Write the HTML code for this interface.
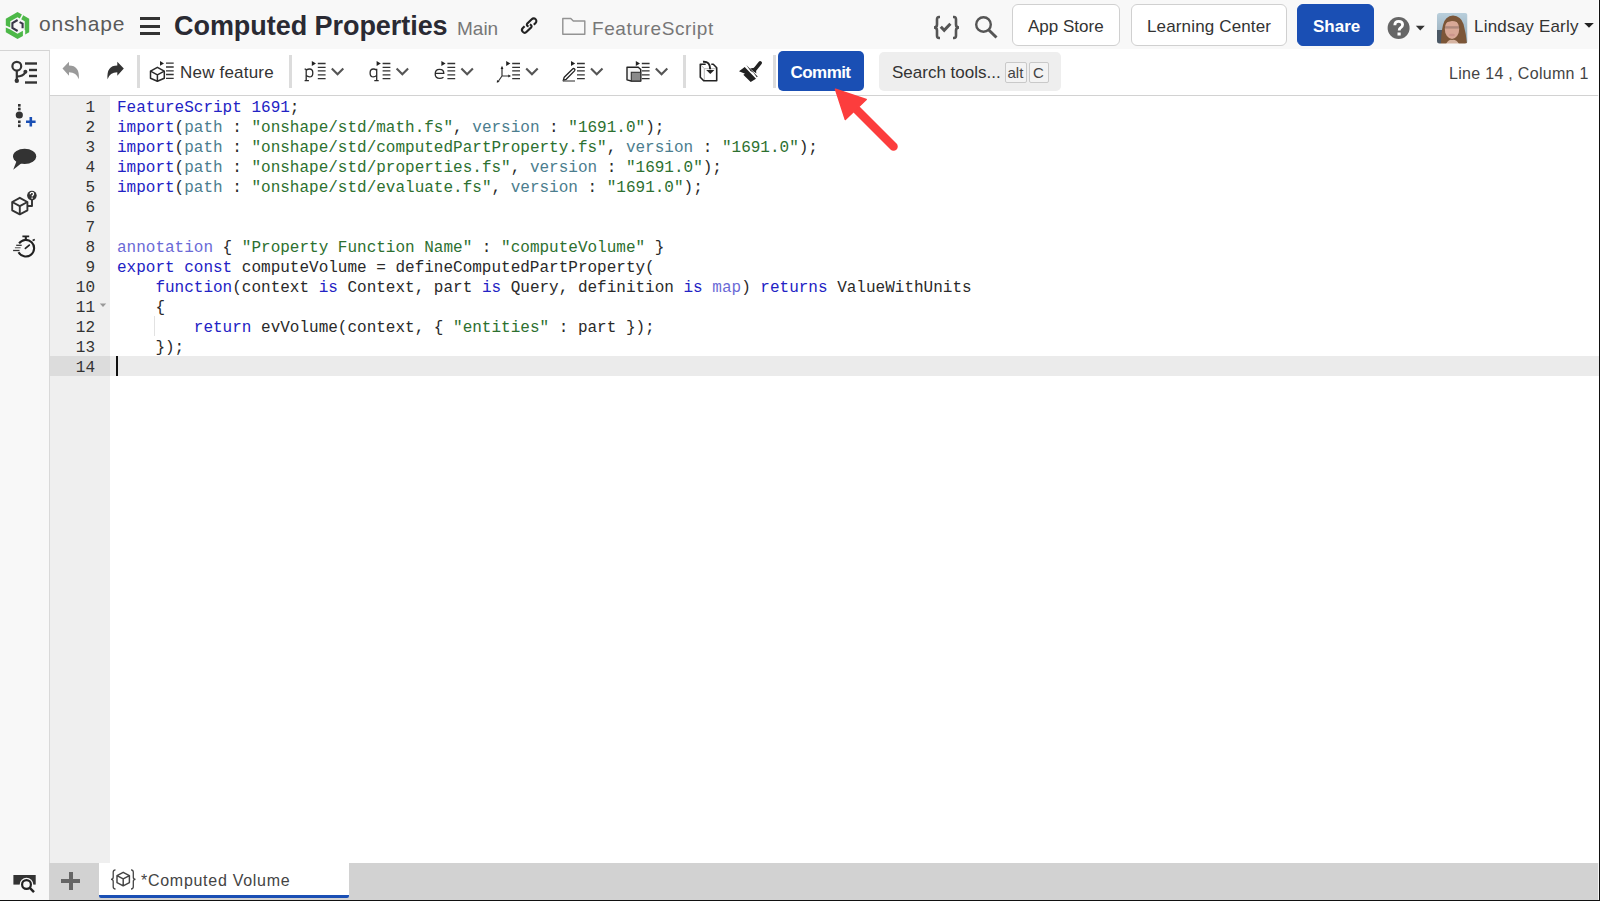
<!DOCTYPE html>
<html><head><meta charset="utf-8">
<style>
*{box-sizing:border-box;margin:0;padding:0}
html,body{width:1600px;height:901px;overflow:hidden;background:#f8f8f8;font-family:"Liberation Sans",sans-serif;position:relative}
.abs{position:absolute}
svg{position:absolute;overflow:visible}
#hdr{left:0;top:0;width:1600px;height:50px;background:#f8f8f8}
#side{left:0;top:50px;width:50px;height:851px;background:#f8f8f8;border-right:1px solid #d9d9d9;border-top:1px solid #d4d4d4}
#tb{left:50px;top:49px;width:1550px;height:47px;background:#fff;border-bottom:1px solid #d2d2d2}
#gut{left:50px;top:96px;width:60px;height:767px;background:#efefef}
#code{left:110px;top:96px;width:1490px;height:767px;background:#fff}
#tabs{left:49px;top:863px;width:1551px;height:38px;background:#d2d2d2}
.t{position:absolute;white-space:nowrap;line-height:1}
.ln{position:absolute;left:50px;width:45px;text-align:right;font-family:"Liberation Mono",monospace;font-size:16px;color:#333;line-height:25px;height:20px}
.cl{position:absolute;left:117px;font-family:"Liberation Mono",monospace;font-size:16px;color:#2a2a2a;line-height:25px;height:20px;white-space:pre}
.k{color:#2222c4}
.v{color:#4b7d8e}
.s{color:#2d7030}
.a{color:#6a6ad6}
.btn{position:absolute;top:4px;height:42px;background:#fff;border:1px solid #d0d0d0;border-radius:6px}
.sep{position:absolute;top:55px;width:3px;height:33px;background:#dcdcdc}
.kbd{position:absolute;top:62px;height:21px;border:1px solid #c9c9c9;border-radius:2px;background:#f3f3f3}
</style></head><body>
<div id="hdr" class="abs"></div>
<div id="side" class="abs"></div>
<div id="tb" class="abs"></div>
<div id="gut" class="abs"></div>
<div id="code" class="abs"></div>
<div id="tabs" class="abs"></div>
<div class="abs" style="left:1598px;top:0;width:1px;height:901px;background:rgba(255,255,255,0.8)"></div>
<div class="abs" style="left:1599px;top:0;width:1px;height:901px;background:#111"></div>
<div class="abs" style="left:0;top:900px;width:1600px;height:1px;background:#111"></div>

<!-- HEADER -->
<!-- logo -->
<svg style="left:0;top:0" width="40" height="48" viewBox="0 0 40 48">
  <g fill="#4db848">
    <path d="M5.8 25.6 V18.75 L17.5 12 L21.9 14.5 L19.8 18.4 L17.5 17.2 L10.3 21.35 V27.4 Z"/>
    <path d="M5.8 27.6 L10.3 29.4 L17.5 33.8 L22.9 30.7 V36.1 L17.5 39 L5.8 32.25 Z"/>
    <path d="M23.2 15.2 L29.2 18.75 V32.25 L25.2 34.5 V30.2 L24.7 29.9 V21.35 L21.2 19.3 Z"/>
  </g>
  <g fill="none" stroke="#393848" stroke-width="2.1">
    <path d="M17.6 20 L12.4 23 V28 L17.6 31"/>
    <path d="M19.6 22.1 L22.6 23.6 V28.2"/>
  </g>
</svg>
<div class="t" style="left:39px;top:13px;font-size:21px;color:#5a5a5a;letter-spacing:0.8px">onshape</div>
<!-- hamburger -->
<div class="abs" style="left:140px;top:17px;width:20px;height:3px;background:#333"></div>
<div class="abs" style="left:140px;top:24.5px;width:20px;height:3px;background:#333"></div>
<div class="abs" style="left:140px;top:32px;width:20px;height:3px;background:#333"></div>
<div class="t" style="left:174px;top:12.5px;font-size:27px;font-weight:bold;color:#2a2a33;letter-spacing:-0.05px">Computed Properties</div>
<div class="t" style="left:457px;top:18.5px;font-size:19px;color:#777">Main</div>
<!-- link icon -->
<svg style="left:516px;top:12px" width="28" height="28" viewBox="0 0 28 28">
  <g fill="none" stroke="#222" stroke-width="2.1" stroke-linecap="butt">
    <path d="M12.6 14.6 Q10 13.6 11.1 11.7 L15.75 7.13 A2.7 2.7 0 0 1 19.57 10.95 L17.8 12.7"/>
    <path d="M13.8 12.4 Q16.4 13.4 15.3 15.3 L10.65 19.87 A2.7 2.7 0 0 1 6.83 16.05 L8.6 14.3"/>
  </g>
</svg>
<!-- folder -->
<svg style="left:560px;top:15px" width="28" height="22" viewBox="0 0 28 22">
  <path d="M2.8 3.5 H10.8 L13.3 6 H24.8 V19.3 H2.8 Z" fill="none" stroke="#939393" stroke-width="1.45" stroke-linejoin="round"/>
</svg>
<div class="t" style="left:592px;top:18.5px;font-size:19px;color:#777;letter-spacing:0.6px">FeatureScript</div>

<!-- braces check -->
<svg style="left:929px;top:12px" width="34" height="30" viewBox="0 0 34 30">
  <g fill="none" stroke="#555" stroke-width="2.6" stroke-linecap="butt">
    <path d="M11 5 H10 Q8 5 8 7.5 V12.5 Q8 15.5 5 15.5 Q8 15.5 8 18.5 V23.5 Q8 26 10 26 H11"/>
    <path d="M24 5 H25 Q27 5 27 7.5 V12.5 Q27 15.5 30 15.5 Q27 15.5 27 18.5 V23.5 Q27 26 25 26 H24"/>
    <path d="M11.8 14.8 L15.2 18.4 L21.4 11.8" stroke-width="3"/>
  </g>
</svg>
<!-- search -->
<svg style="left:970px;top:12px" width="32" height="30" viewBox="0 0 32 30">
  <circle cx="13.5" cy="12.5" r="7.3" fill="none" stroke="#555" stroke-width="2.4"/>
  <path d="M18.8 18 L26.5 25.5" stroke="#555" stroke-width="3"/>
</svg>

<div class="btn" style="left:1012px;width:108px"></div>
<div class="t" style="left:1028px;top:18px;font-size:17px;color:#333">App Store</div>
<div class="btn" style="left:1131px;width:156px"></div>
<div class="t" style="left:1147px;top:18px;font-size:17px;color:#333;letter-spacing:0.15px">Learning Center</div>
<div class="btn" style="left:1297px;width:77px;background:#1a4fb4;border-color:#1a4fb4"></div>
<div class="t" style="left:1313px;top:18px;font-size:17px;color:#fff;font-weight:bold">Share</div>
<!-- help -->
<svg style="left:1386px;top:15.5px" width="44" height="26" viewBox="0 0 44 26">
  <circle cx="12.6" cy="12" r="11" fill="#666"/>
  <path d="M8.8 9.2 Q8.8 5.4 12.7 5.4 Q16.6 5.4 16.6 8.8 Q16.6 10.8 14.4 12 Q13.2 12.7 13.2 14.4" fill="none" stroke="#fff" stroke-width="2.8"/>
  <rect x="11.5" y="16.5" width="3.2" height="3" fill="#fff"/>
  <path d="M29.8 9.8 H38.8 L34.3 14.5 Z" fill="#333"/>
</svg>
<!-- avatar -->
<svg style="left:1437px;top:13px" width="30.5" height="30.5" viewBox="0 0 30.5 30.5">
  <defs>
    <clipPath id="av"><rect x="0" y="0" width="30.5" height="30.5" rx="2.5"/></clipPath>
    <linearGradient id="avbg" x1="0" y1="0" x2="0" y2="1"><stop offset="0" stop-color="#b9cfdc"/><stop offset="1" stop-color="#8ea3b2"/></linearGradient>
  </defs>
  <filter id="avb" x="-10%" y="-10%" width="120%" height="120%"><feGaussianBlur stdDeviation="0.7"/></filter>
  <g clip-path="url(#av)"><g filter="url(#avb)">
    <rect width="30.5" height="30.5" fill="url(#avbg)"/>
    <rect x="0" y="17" width="5" height="14" fill="#4b5965"/>
    <path d="M4 31 Q4 20 6 12 Q8 3 16 2.5 Q24 3 26.5 11 Q29 20 30 31 Z" fill="#7b5738"/>
    <ellipse cx="15" cy="16" rx="7.2" ry="10" fill="#d8a896"/>
    <path d="M7.5 11 Q10 4 16 4 Q22 4.5 23.5 12 Q20 8 15 8 Q10 8.5 7.5 11Z" fill="#7b5738"/>
    <rect x="8" y="13.2" width="14" height="2.4" fill="#9c7a70" opacity="0.7"/>
    <ellipse cx="15" cy="22" rx="3" ry="1.2" fill="#c88e88" opacity="0.7"/>
    <path d="M9 31 Q12 26 15 27 Q19 26 22 31 Z" fill="#d6b4a2"/>
  </g></g>
</svg>
<div class="t" style="left:1474px;top:18px;font-size:17px;color:#333;letter-spacing:0.2px">Lindsay Early</div>
<svg style="left:1580px;top:18px" width="18" height="14" viewBox="0 0 18 14">
  <path d="M4.2 5 H13.8 L9 9.8 Z" fill="#222"/>
</svg>

<!-- LEFT SIDEBAR -->
<svg style="left:0;top:50px" width="50" height="220" viewBox="0 0 50 220">
  <!-- feature list -->
  <g fill="none" stroke="#333" stroke-width="2.2">
    <circle cx="16.8" cy="16.2" r="4.4"/>
    <path d="M16.8 20.6 V30.5"/>
    <path d="M16.8 26.5 Q23 26.5 25.2 22.5"/>
  </g>
  <circle cx="16.8" cy="30.8" r="2.2" fill="#333"/>
  <circle cx="25.4" cy="21.8" r="2" fill="#333"/>
  <g stroke="#333" stroke-width="2.4">
    <path d="M25 13.5 H37"/>
    <path d="M29 20 H37"/>
    <path d="M29 26 H37"/>
    <path d="M25 32.5 H37"/>
  </g>
  <!-- insert -->
  <g fill="#333">
    <rect x="18" y="54" width="2.6" height="2.6"/>
    <rect x="18" y="57.7" width="2.6" height="2.6"/>
    <circle cx="19.3" cy="65" r="3.6"/>
    <rect x="18" y="70.5" width="2.6" height="2.6"/>
    <rect x="18" y="74.5" width="2.6" height="2.6"/>
  </g>
  <path d="M26 71.7 H35.6 M30.8 67 V76.5" stroke="#1a4fb4" stroke-width="2.6"/>
  <!-- comment -->
  <ellipse cx="24.6" cy="106.3" rx="11.6" ry="7.6" fill="#333"/>
  <path d="M17 110 L13.2 119.8 L23 112 Z" fill="#333"/>
  <!-- cube ? -->
  <g fill="none" stroke="#333" stroke-width="1.9" stroke-linejoin="round">
    <path d="M12.2 152 L19.8 147.8 L27.4 152 V160.3 L19.8 164.4 L12.2 160.3 Z"/>
    <path d="M12.2 152 L19.8 156.2 L27.4 152 M19.8 156.2 V164.4"/>
    <path d="M27.4 156 H32 V150"/>
  </g>
  <circle cx="31.9" cy="145.6" r="4.8" fill="#333"/>
  <path d="M30.2 144.3 Q30.2 142.4 31.9 142.4 Q33.6 142.4 33.6 144 Q33.6 145 32.3 145.7 V146.6" fill="none" stroke="#fff" stroke-width="1.3"/>
  <rect x="31.4" y="147.5" width="1.4" height="1.3" fill="#fff"/>
  <!-- stopwatch -->
  <g fill="none" stroke="#222" stroke-width="2.1">
    <path d="M19.09 193.32 A8.3 8.3 0 1 1 18.54 202.22"/>
    <path d="M25.8 186.5 V189.8"/>
  </g>
  <path d="M22.4 186.4 H29.2 M32.6 190.6 L34.8 189.6" stroke="#222" stroke-width="1.6"/>
  <path d="M25.4 198.4 L29.3 195.1" stroke="#222" stroke-width="1.7" stroke-linecap="round"/>
  <g stroke="#333" stroke-width="1.3">
    <path d="M16.2 195.3 H21.7"/>
    <path d="M14.9 197.7 H20.6" stroke="#777"/>
    <path d="M13.1 200.5 H19.5"/>
  </g>
</svg>
<!-- bottom monitor search -->
<svg style="left:0;top:860px" width="50" height="40" viewBox="0 0 50 40">
  <rect x="13.4" y="15" width="22.3" height="9.6" fill="#333"/>
  <circle cx="26.5" cy="24.5" r="6.8" fill="#f8f8f8"/>
  <circle cx="26.5" cy="24.5" r="4.4" fill="#f8f8f8" stroke="#222" stroke-width="2.2"/>
  <path d="M29.8 27.8 L34 32.2" stroke="#222" stroke-width="2.4"/>
</svg>

<!-- TOOLBAR -->
<!-- undo -->
<svg style="left:58px;top:58px" width="26" height="26" viewBox="0 0 26 26">
  <path d="M4.5 10.6 L11 3.8 V7.6 Q22 7.6 20.8 21.3 Q18.5 14.3 11 14.3 V17.8 Z" fill="#9a9a9a"/>
</svg>
<!-- redo -->
<svg style="left:103px;top:58px" width="26" height="26" viewBox="0 0 26 26">
  <path d="M20.8 10.6 L14.3 3.8 V7.6 Q3.3 7.6 4.5 21.3 Q6.8 14.3 14.3 14.3 V17.8 Z" fill="#333"/>
</svg>
<div class="sep" style="left:137px"></div>
<!-- new feature -->
<svg style="left:146px;top:58px" width="34" height="28" viewBox="0 0 34 28">
  <g fill="none" stroke="#2a2a2a" stroke-width="1.5" stroke-linejoin="round">
    <path d="M11.4 9.3 L18.3 13.2 V20.2 L11.4 23.3 L4.5 20.2 V13.2 Z"/>
    <path d="M4.5 13.2 L11.4 16.8 L18.3 13.2 M11.4 16.8 V23.3"/>
  </g>
  <path d="M14 3 L18 5.4 L14 7.8Z" fill="#222"/>
  <g stroke="#333" stroke-width="1.3">
    <path d="M20 5.2 H27.7 M20 9 H27.7 M20 12.8 H27.7 M20 16.5 H27.7 M20 20.3 H27.7"/>
  </g>
</svg>
<div class="t" style="left:180px;top:64px;font-size:17px;color:#333;letter-spacing:0.2px">New feature</div>
<div class="sep" style="left:289px"></div>

<!-- dropdown icon group -->
<svg style="left:300px;top:55px" width="390" height="34" viewBox="0 0 390 34">
  <defs>
    <g id="lines">
      <path d="M0 0 L4.2 2.45 L0 4.9 Z" fill="#222"/>
      <g stroke="#333" stroke-width="1.3"><path d="M6 2.5 H13.8 M6 6.3 H13.8 M6 9.9 H13.8 M6 13.8 H13.8 M6 17.6 H13.8"/></g>
      <path d="M20 7.5 L25.75 13.3 L31.5 7.5" fill="none" stroke="#555" stroke-width="2.1"/>
    </g>
  </defs>
  <use href="#lines" x="11.8" y="6"/>
  <use href="#lines" x="76.6" y="6"/>
  <use href="#lines" x="141.4" y="6"/>
  <use href="#lines" x="206.2" y="6"/>
  <use href="#lines" x="271" y="6"/>
  <use href="#lines" x="335.8" y="6"/>
  <!-- p -->
  <g fill="none" stroke="#2a2a2a" stroke-width="1.3">
    <path d="M6.2 14 V25.6 M4.6 25.6 H8.9 M4.6 14.1 H6.2"/>
    <path d="M6.2 15.2 Q7.8 14 9.6 14 Q12.8 14 12.8 17.9 Q12.8 21.9 9.6 21.9 Q7.8 21.9 6.2 20.6"/>
  </g>
  <!-- q -->
  <g fill="none" stroke="#2a2a2a" stroke-width="1.3">
    <path d="M76.7 13.8 V25.6 M74.3 25.7 H78.7"/>
    <path d="M76.7 15.2 Q75 14 73.4 14 Q70.1 14 70.1 17.9 Q70.1 21.9 73.4 21.9 Q75 21.9 76.7 20.6"/>
  </g>
  <!-- e -->
  <g fill="none" stroke="#2a2a2a" stroke-width="1.3">
    <path d="M135.2 18.3 H143.8 Q143.8 14.3 139.5 14.3 Q135.2 14.3 135.2 19 Q135.2 23.4 139.8 23.4 Q142 23.4 143.5 22.3"/>
  </g>
  <!-- axes -->
  <g fill="none" stroke="#333" stroke-width="1.2">
    <path d="M202 12.5 V21 H209 M202 21 L198.5 26"/>
  </g>
  <path d="M200.6 14 L202 10.8 L203.4 14Z M208.3 19.6 L211 21 L208.3 22.4Z M197 25 L196.8 27.8 L199.6 26.8Z" fill="#222"/>
  <!-- pencil -->
  <g fill="none" stroke="#222" stroke-width="1.3" stroke-linejoin="round">
    <path d="M263.2 25.6 L264.2 22.3 L272.6 14 Q273.6 13.1 274.6 14 Q275.4 14.9 274.5 15.9 L266.2 24.3 Z"/>
  </g>
  <path d="M262.8 26 H275" stroke="#666" stroke-width="1.4"/>
  <!-- boxes -->
  <g>
    <path d="M327 12.3 H338.3 L340.7 14.5 V26 H331.3 L327 24.8Z" fill="#f4f4f4" stroke="#222" stroke-width="1.4" stroke-linejoin="round"/>
    <rect x="331.3" y="17.3" width="9.4" height="8.7" fill="#8a8a8a" stroke="#333" stroke-width="1.1"/>
  </g>
</svg>
<div class="sep" style="left:683px"></div>
<!-- import -->
<svg style="left:696px;top:58px" width="26" height="28" viewBox="0 0 26 28">
  <g fill="none" stroke="#bbb" stroke-width="1">
    <path d="M4.3 6.3 L8.3 10.7 H20.7 M8.3 10.7 V22.7"/>
  </g>
  <g fill="none" stroke="#222" stroke-width="1.6" stroke-linejoin="round">
    <path d="M9.7 6.3 H4.3 V19.3 L7.7 22.7 H20.7 V9.7 L17.3 6.3 H15.3"/>
    <path d="M7 3.8 Q14.2 3.3 14.2 11.3" stroke-width="2"/>
  </g>
  <path d="M10.2 12 H18.4 L14.3 16 Z" fill="#222"/>
</svg>
<!-- brush -->
<svg style="left:736px;top:58px" width="28" height="28" viewBox="0 0 28 28">
  <path d="M18.6 11.8 L24.2 4.8" stroke="#222" stroke-width="3.6" stroke-linecap="round"/>
  <path d="M10.3 7 L21.7 18.5 L20.8 19.3 L17.5 14.8 Q16 13.8 14.5 13 Z" fill="#222"/>
  <path d="M14 10.5 L19.8 9.5 L20.3 15.5 Z" fill="#222"/>
  <path d="M8.7 9 L20 20.7 L14.7 24 L7.3 16.8 L9 15.7 L3 13.3 Z" fill="#222"/>
</svg>
<div class="sep" style="left:773px"></div>
<div class="abs" style="left:778px;top:51px;width:86px;height:39.5px;background:#1a4fb4;border-radius:5px"></div>
<div class="t" style="left:790.5px;top:63.5px;font-size:17px;font-weight:bold;color:#fff;letter-spacing:-0.55px">Commit</div>
<div class="abs" style="left:879px;top:52px;width:182px;height:38.5px;background:#eeeeee;border-radius:5px"></div>
<div class="t" style="left:892px;top:63.5px;font-size:17px;color:#333;letter-spacing:0px">Search tools...</div>
<div class="kbd" style="left:1005px;width:22px"></div>
<div class="kbd" style="left:1028.5px;width:20px"></div>
<div class="t" style="left:1007.5px;top:65px;font-size:15px;color:#444">alt</div>
<div class="t" style="left:1033px;top:65px;font-size:15px;color:#444">C</div>
<div class="t" style="left:1449px;top:66.3px;font-size:16px;color:#444;letter-spacing:0.3px">Line 14 , Column 1</div>

<!-- CODE -->
<div class="abs" style="left:50px;top:356px;width:60px;height:20px;background:#dcdcdc"></div>
<div class="abs" style="left:110px;top:356px;width:1489px;height:20px;background:#ebebeb"></div>
<div class="abs" style="left:116px;top:356px;width:2px;height:19.5px;background:#111"></div>
<div class="abs" style="left:154px;top:316px;width:1px;height:20px;background:#e2e2e2"></div>
<svg style="left:98px;top:302px" width="10" height="6" viewBox="0 0 10 6"><path d="M1.8 1.5 H8.2 L5 4.9Z" fill="#999"/></svg>

<div class="ln" style="top:96px">1</div>
<div class="ln" style="top:116px">2</div>
<div class="ln" style="top:136px">3</div>
<div class="ln" style="top:156px">4</div>
<div class="ln" style="top:176px">5</div>
<div class="ln" style="top:196px">6</div>
<div class="ln" style="top:216px">7</div>
<div class="ln" style="top:236px">8</div>
<div class="ln" style="top:256px">9</div>
<div class="ln" style="top:276px">10</div>
<div class="ln" style="top:296px">11</div>
<div class="ln" style="top:316px">12</div>
<div class="ln" style="top:336px">13</div>
<div class="ln" style="top:356px">14</div>

<div class="cl" style="top:96px"><span class="k">FeatureScript 1691</span>;</div>
<div class="cl" style="top:116px"><span class="k">import</span>(<span class="v">path</span> : <span class="s">"onshape/std/math.fs"</span>, <span class="v">version</span> : <span class="s">"1691.0"</span>);</div>
<div class="cl" style="top:136px"><span class="k">import</span>(<span class="v">path</span> : <span class="s">"onshape/std/computedPartProperty.fs"</span>, <span class="v">version</span> : <span class="s">"1691.0"</span>);</div>
<div class="cl" style="top:156px"><span class="k">import</span>(<span class="v">path</span> : <span class="s">"onshape/std/properties.fs"</span>, <span class="v">version</span> : <span class="s">"1691.0"</span>);</div>
<div class="cl" style="top:176px"><span class="k">import</span>(<span class="v">path</span> : <span class="s">"onshape/std/evaluate.fs"</span>, <span class="v">version</span> : <span class="s">"1691.0"</span>);</div>
<div class="cl" style="top:236px"><span class="a">annotation</span> { <span class="s">"Property Function Name"</span> : <span class="s">"computeVolume"</span> }</div>
<div class="cl" style="top:256px"><span class="k">export const</span> computeVolume = defineComputedPartProperty(</div>
<div class="cl" style="top:276px">    <span class="k">function</span>(context <span class="k">is</span> Context, part <span class="k">is</span> Query, definition <span class="k">is</span> <span class="a">map</span>) <span class="k">returns</span> ValueWithUnits</div>
<div class="cl" style="top:296px">    {</div>
<div class="cl" style="top:316px">        <span class="k">return</span> evVolume(context, { <span class="s">"entities"</span> : part });</div>
<div class="cl" style="top:336px">    });</div>

<!-- red arrow -->
<svg style="left:820px;top:80px" width="90" height="80" viewBox="0 0 90 80">
  <path d="M37 30 L73.5 66.5" stroke="#fc3d3d" stroke-width="8.5" stroke-linecap="round"/>
  <path d="M15.5 9.3 L46.2 19.5 L25.3 39.5 Z" fill="#fc3d3d" stroke="#fc3d3d" stroke-width="1.5" stroke-linejoin="round"/>
</svg>

<!-- TABS -->
<div class="abs" style="left:99px;top:863px;width:250px;height:35px;background:#fff;border-bottom:3px solid #1a4fb4;border-radius:0 0 2px 2px"></div>
<svg style="left:108px;top:866px" width="30" height="26" viewBox="0 0 30 26">
  <g fill="none" stroke="#444" stroke-width="1.3">
    <path d="M7.5 3.8 Q5.2 3.8 5.2 6.3 V11.2 Q5.2 13.3 3 13.3 Q5.2 13.3 5.2 15.4 V20.5 Q5.2 23 7.5 23"/>
    <path d="M23 3.8 Q25.3 3.8 25.3 6.3 V11.2 Q25.3 13.3 27.5 13.3 Q25.3 13.3 25.3 15.4 V20.5 Q25.3 23 23 23"/>
    <path d="M9 9.6 L15.2 6.3 L21.4 9.6 V16.6 L15.2 19.8 L9 16.6 Z M9 9.6 L15.2 12.9 L21.4 9.6 M15.2 12.9 V19.8" stroke-width="1.45" stroke-linejoin="round"/>
  </g>
</svg>
<div class="t" style="left:141px;top:872.5px;font-size:16px;color:#444;letter-spacing:0.72px">*Computed Volume</div>
<!-- plus -->
<div class="abs" style="left:61.3px;top:878.9px;width:18.7px;height:3.8px;background:#666"></div>
<div class="abs" style="left:68.8px;top:871.5px;width:3.8px;height:18.2px;background:#666"></div>
</body></html>
